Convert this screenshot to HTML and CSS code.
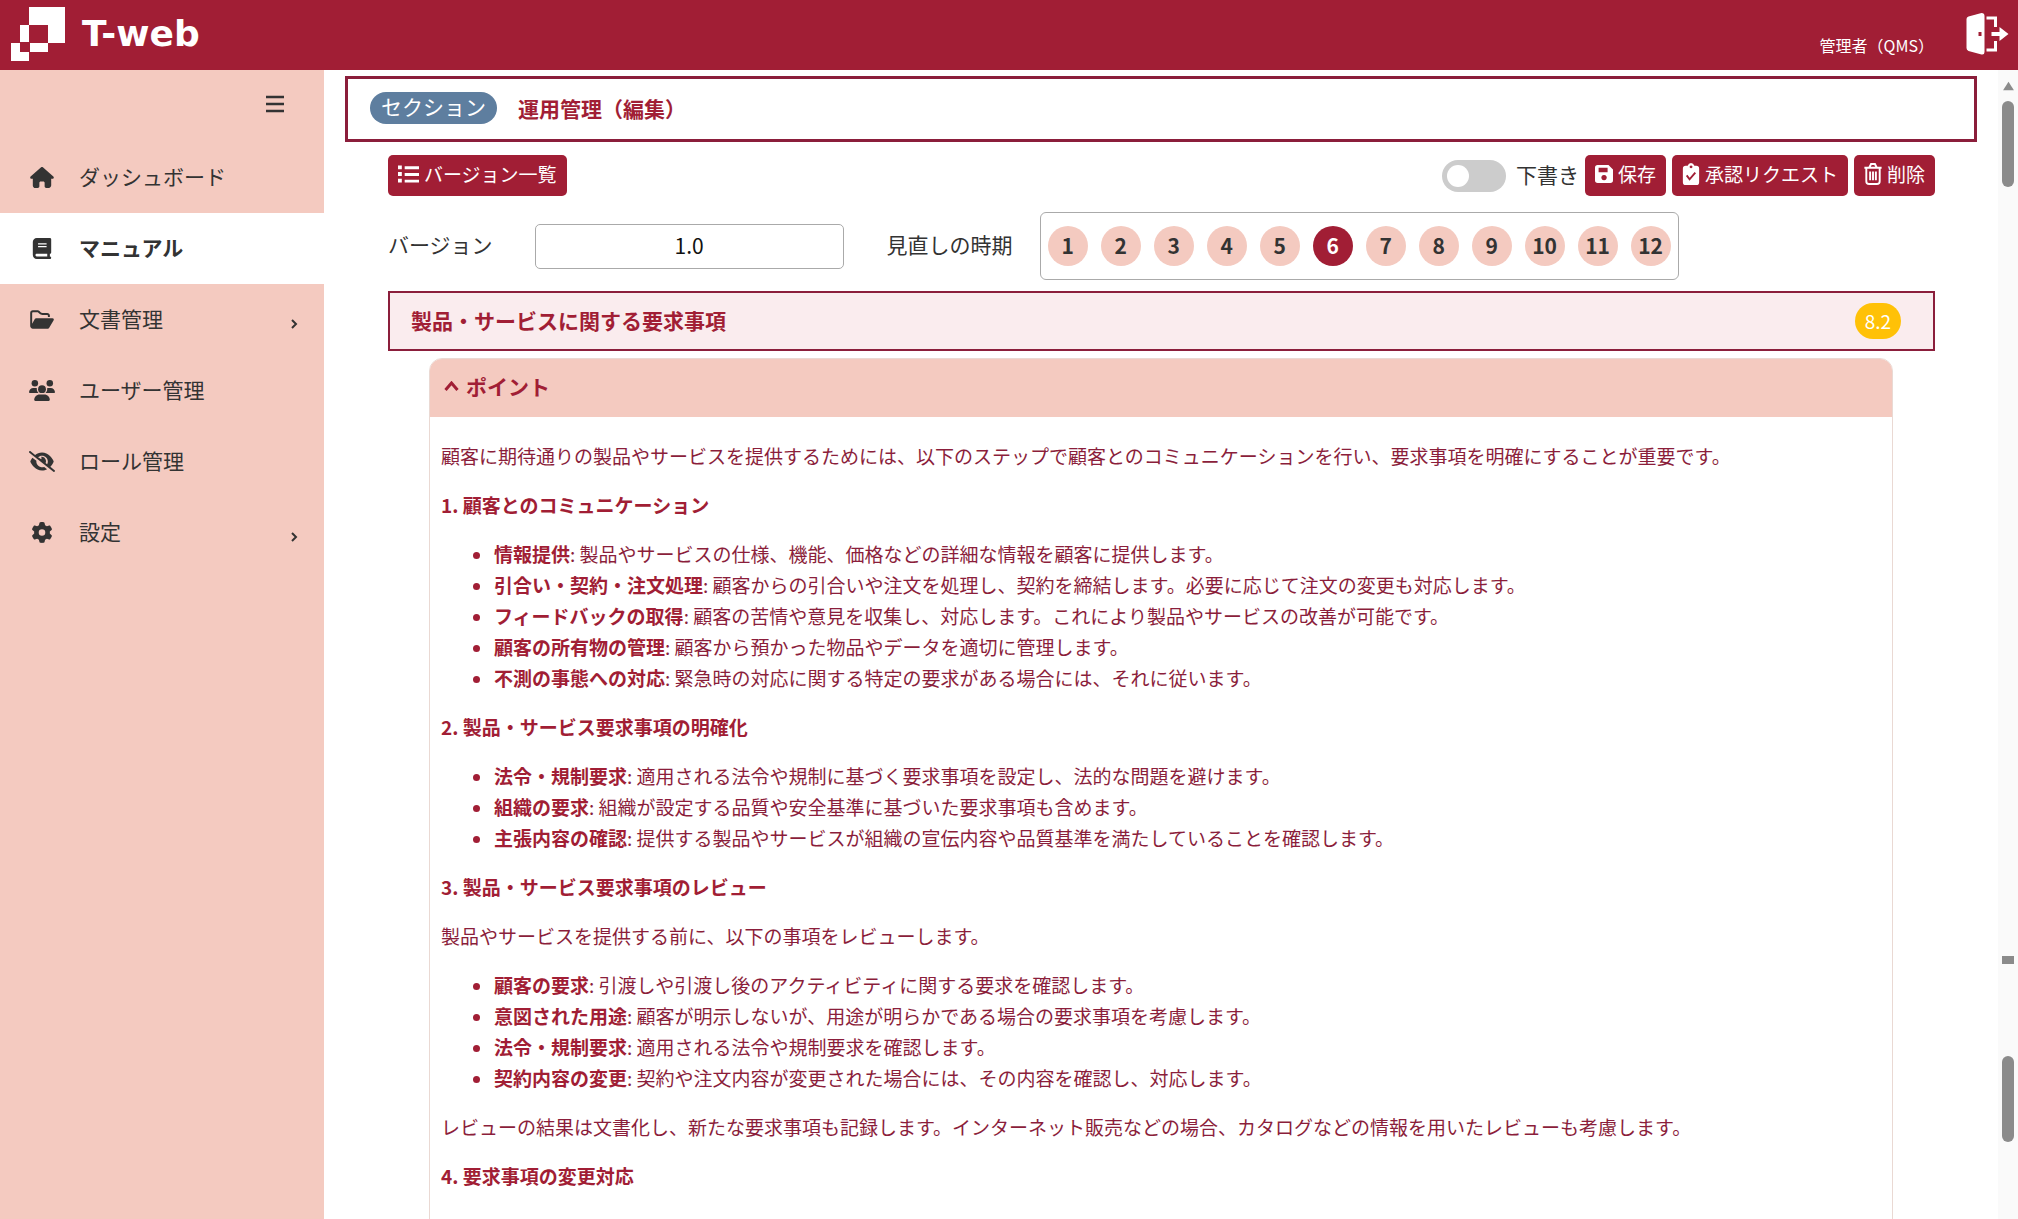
FILE: index.html
```html
<!DOCTYPE html>
<html lang="ja">
  <head>
    <meta charset="UTF-8" />
    <meta name="viewport" content="width=device-width, initial-scale=1.0" />
    <title>T-web</title>

    <link rel="stylesheet" href="styles.css">
  </head>
  <body>
    <header class="topbar">
      <a href="#" class="brand">
        <svg class="brand-mark" viewBox="0 0 54 54" fill="#fff">
          <path d="M18 0h36v36H37V18H18z" />
          <path d="M9 18h9v17H9z" />
          <path d="M0 36h9v9h9v9H0z" />
          <path d="M19 36h18v9H19z" />
        </svg>
        <span class="brand-name">T-web</span>
      </a>
      <div class="account">
        <span class="user-name">管理者（QMS）</span>
        <button type="button" class="logout" aria-label="ログアウト">
          <svg viewBox="0 0 42 42">
            <path d="M0 6Q0 4 2 3.500L15 0Q18 0 18 3V39Q18 42 15 41.500L2 38Q0 37 0 35z" fill="#fff" />
            <path d="M12 19h3v4h-3z" fill="#a11e35" />
            <path d="M20 5h9v9M29 28v9h-9" fill="none" stroke="#fff" stroke-width="3" />
            <path d="M25 19h8v-5l9 7-9 7v-5h-8z" fill="#fff" />
          </svg>
        </button>
      </div>
    </header>

    <div class="layout">
      <nav class="sidebar">
        <button type="button" class="menu-toggle" aria-label="メニュー">
          <svg viewBox="0 0 18 18" stroke="#333" stroke-width="2.500"><path d="M0 2h18M0 9h18M0 16h18" /></svg>
        </button>
        <ul class="menu">
          <li>
            <a href="#">
              <svg viewBox="0 0 576 512"><path d="M575.800 255.500c0 18-15 32.100-32 32.100h-32l.7 160.200c0 36-28 64.200-56 64.200H392c-22 0-40-18-40-40v-88c0-18-14-32-32-32h-64c-18 0-32 14-32 32v88c0 22-18 40-40 40h-64c-28 0-56-28-56-64V287.600H32c-18 0-32-14-32-32 0-9 3-17 10-24L266.400 8c7-7 15-8 22-8s15 2 21 7l255 224.500c8 7 12 15 11.400 24z" /></svg>
              <span>ダッシュボード</span>
            </a>
          </li>
          <li class="active">
            <a href="#">
              <svg viewBox="0 0 448 512"><path fill-rule="evenodd" d="M96 0C43 0 0 43 0 96v320c0 53 43 96 96 96h320c18 0 32-14 32-32s-14-32-32-32v-64c18 0 32-14 32-32V32c0-18-14-32-32-32H96zm0 384h256v64H96c-18 0-32-14-32-32s14-32 32-32zm32-256h208v32H128zm0 64h208v32H128z" /></svg>
              <span>マニュアル</span>
            </a>
          </li>
          <li>
            <a href="#">
              <svg viewBox="0 0 576 512"><path d="M384 480h48c11 0 22-6 28-16l112-192c6-10 6-22 0-32s-16-16-28-16H144c-11 0-22 6-28 16L48 357V96c0-9 7-16 16-16h118c4 0 8 2 11 5l26 26c21 21 50 33 80 33h117c9 0 16 7 16 16v32h48v-32c0-35-29-64-64-64H299c-17 0-33-7-45-19l-27-26c-12-12-28-19-45-19H64C29 32 0 61 0 96v320c0 35 29 64 64 64z" /></svg>
              <span>文書管理</span>
              <svg class="arrow" viewBox="0 0 7 10"><path d="M1 1l4 4-4 4" /></svg>
            </a>
          </li>
          <li>
            <a href="#">
              <svg class="wide" viewBox="0 0 640 512"><circle cx="144" cy="80" r="80" /><circle cx="512" cy="80" r="80" /><path d="M0 299c0-59 48-107 107-107h43c16 0 31 4 45 10-10 49 9 90 41 118H21c-12 0-21-10-21-21zm405 21c32-28 51-69 41-118 14-6 28-10 44-10h43c59 0 107 48 107 107 0 11-9 21-21 21z" /><circle cx="320" cy="224" r="96" /><path d="M128 485c0-73 60-133 133-133h118c73 0 133 60 133 133 0 15-12 27-27 27H155c-15 0-27-12-27-27z" /></svg>
              <span>ユーザー管理</span>
            </a>
          </li>
          <li>
            <a href="#">
              <svg class="wide" viewBox="0 0 640 512"><path d="M39 5c-10-8-25-6-34 4s-6 25 4 34l592 464c10 8 25 6 34-4s6-25-4-34L526 387c40-40 66-86 78-117 4-9 4-19 0-28-16-37-49-87-95-130C465 68 400 32 320 32c-68 0-125 26-169 61zm184 145c26-24 60-38 97-38 80 0 144 64 144 144 0 25-6 48-17 69l-39-31c11-23 13-51 6-78-14-52-64-84-116-78 6 10 10 22 10 34 0 10-2 20-6 28zM373 390a144 144 0 0 1-191-151L83 161c-22 28-38 58-47 81-4 9-4 19 0 28 16 37 49 87 95 130 44 44 109 80 189 80 47 0 89-13 125-33z" /></svg>
              <span>ロール管理</span>
            </a>
          </li>
          <li>
            <a href="#">
              <svg viewBox="0 0 512 512"><path fill-rule="evenodd" d="M496 167c3 9 0 18-6 25l-44 39c2 16 2 34 0 50l44 39c6 7 9 16 6 25-10 27-24 52-42 75-6 7-15 9-24 6l-56-18c-13 10-28 19-43 25l-13 57c-2 9-9 16-18 18-29 5-59 5-88 0-9-2-16-9-18-18l-13-57c-15-6-30-15-43-25l-56 18c-9 3-18 1-24-6-18-23-32-48-42-75-3-9 0-18 6-25l44-39c-2-16-2-34 0-50l-44-39c-6-7-9-16-6-25 10-27 24-52 42-75 6-7 15-9 24-6l56 18c13-10 28-19 43-25l13-57c2-9 9-16 18-18 29-5 59-5 88 0 9 2 16 9 18 18l13 57c15 6 30 15 43 25l56-18c9-3 18-1 24 6 18 23 32 48 42 75zM256 336a80 80 0 1 0 0-160 80 80 0 1 0 0 160z" /></svg>
              <span>設定</span>
              <svg class="arrow" viewBox="0 0 7 10"><path d="M1 1l4 4-4 4" /></svg>
            </a>
          </li>
        </ul>
      </nav>

      <main class="content">
        <div class="section-title">
          <span class="section-badge">セクション</span>
          <h1>運用管理（編集）</h1>
        </div>

        <form class="editor">
          <div class="toolbar">
            <button type="button" class="btn">
              <svg class="list" viewBox="0 0 22 20"><path d="M0 1h4v4H0zM0 8h4v4H0zM0 15h4v4H0zM7 2h15v3H7zM7 9h15v3H7zM7 16h15v3H7z" /></svg>
              バージョン一覧
            </button>
            <div class="actions">
              <input type="checkbox" id="draft" class="switch" />
              <label for="draft">下書き</label>
              <button type="button" class="btn">
                <svg viewBox="0 0 20 20"><path fill-rule="evenodd" d="M3 0h12l5 5v12q0 3-3 3H3q-3 0-3-3V3q0-3 3-3zM4 3v5h10V3zM10 11a3 3 0 1 0 .1 0z" /></svg>
                保存
              </button>
              <button type="button" class="btn">
                <svg viewBox="0 0 17 23"><path fill-rule="evenodd" d="M3 3h2q1-3 3.500-3T12 3h2q3 0 3 3v14q0 3-3 3H3q-3 0-3-3V6q0-3 3-3zM8.500 2.500a1.500 1.500 0 1 0 .1 0z" /><path d="M4 13l3 4 6-7" fill="none" stroke="#a11e35" stroke-width="2" /></svg>
                承認リクエスト
              </button>
              <button type="button" class="btn">
                <svg viewBox="0 0 18 23"><path d="M0 5h18M5 5l2-4h4l2 4M2 5v14q0 3 3 3h8q3 0 3-3V5M6 9v9M9 9v9M12 9v9" fill="none" stroke="#fff" stroke-width="2" /></svg>
                削除
              </button>
            </div>
          </div>

          <div class="fields">
            <label for="version">バージョン</label>
            <input type="text" id="version" value="1.0" />
            <span class="review-label">見直しの時期</span>
            <div class="months">
              <button type="button">1</button>
              <button type="button">2</button>
              <button type="button">3</button>
              <button type="button">4</button>
              <button type="button">5</button>
              <button type="button" class="selected">6</button>
              <button type="button">7</button>
              <button type="button">8</button>
              <button type="button">9</button>
              <button type="button">10</button>
              <button type="button">11</button>
              <button type="button">12</button>
            </div>
          </div>

          <div class="clause">
            <h2>製品・サービスに関する要求事項</h2>
            <span class="clause-no">8.2</span>
          </div>
        </form>

        <section class="point">
          <button type="button" class="point-header">
            <svg viewBox="0 0 16 10"><path d="M2 9l6-7 6 7" /></svg>
            ポイント
          </button>
          <div class="point-body">
            <p>顧客に期待通りの製品やサービスを提供するためには、以下のステップで顧客とのコミュニケーションを行い、要求事項を明確にすることが重要です。</p>
            <h3>1. 顧客とのコミュニケーション</h3>
            <ul>
              <li><strong>情報提供</strong>: 製品やサービスの仕様、機能、価格などの詳細な情報を顧客に提供します。</li>
              <li><strong>引合い・契約・注文処理</strong>: 顧客からの引合いや注文を処理し、契約を締結します。必要に応じて注文の変更も対応します。</li>
              <li><strong>フィードバックの取得</strong>: 顧客の苦情や意見を収集し、対応します。これにより製品やサービスの改善が可能です。</li>
              <li><strong>顧客の所有物の管理</strong>: 顧客から預かった物品やデータを適切に管理します。</li>
              <li><strong>不測の事態への対応</strong>: 緊急時の対応に関する特定の要求がある場合には、それに従います。</li>
            </ul>
            <h3>2. 製品・サービス要求事項の明確化</h3>
            <ul>
              <li><strong>法令・規制要求</strong>: 適用される法令や規制に基づく要求事項を設定し、法的な問題を避けます。</li>
              <li><strong>組織の要求</strong>: 組織が設定する品質や安全基準に基づいた要求事項も含めます。</li>
              <li><strong>主張内容の確認</strong>: 提供する製品やサービスが組織の宣伝内容や品質基準を満たしていることを確認します。</li>
            </ul>
            <h3>3. 製品・サービス要求事項のレビュー</h3>
            <p>製品やサービスを提供する前に、以下の事項をレビューします。</p>
            <ul>
              <li><strong>顧客の要求</strong>: 引渡しや引渡し後のアクティビティに関する要求を確認します。</li>
              <li><strong>意図された用途</strong>: 顧客が明示しないが、用途が明らかである場合の要求事項を考慮します。</li>
              <li><strong>法令・規制要求</strong>: 適用される法令や規制要求を確認します。</li>
              <li><strong>契約内容の変更</strong>: 契約や注文内容が変更された場合には、その内容を確認し、対応します。</li>
            </ul>
            <p>レビューの結果は文書化し、新たな要求事項も記録します。インターネット販売などの場合、カタログなどの情報を用いたレビューも考慮します。</p>
            <h3>4. 要求事項の変更対応</h3>
          </div>
        </section>
      </main>

      <div class="scrollbar">
        <svg viewBox="0 0 12 10"><path d="M6 1l5 8H1z" /></svg>
        <div class="thumb"></div>
        <div class="grip"></div>
        <div class="thumb"></div>
      </div>
    </div>
  </body>
</html>
```
FILE: styles.css
```css
* {
  box-sizing: border-box;
}

body {
  margin: 0;
  height: 100vh;
  overflow: hidden;
  display: flex;
  flex-direction: column;
  font-family: "Noto Sans CJK JP", sans-serif;
  font-size: 21px;
  line-height: 30px;
  color: #333;
  background-color: #fff;
}

button,
input {
  font: inherit;
  color: inherit;
}

button {
  border: none;
  cursor: pointer;
}

a {
  color: inherit;
  text-decoration: none;
}

/* header */
.topbar {
  flex: none;
  height: 70px;
  display: flex;
  justify-content: space-between;
  padding: 0 9px 0 11px;
  color: white;
  background-color: #a11e35;
}

.brand {
  display: flex;
  align-items: center;
  gap: 17px;
  padding-bottom: 2px;
}

.brand-mark {
  width: 54px;
  height: 54px;
}

.brand-name {
  font-family: "DejaVu Sans", sans-serif;
  font-size: 36px;
  font-weight: bold;
}

.account {
  display: flex;
  align-items: flex-start;
  gap: 32px;
}

.user-name {
  margin-top: 30px;
  font-size: 16px;
}

.logout {
  padding: 0;
  margin-top: 13px;
  background: none;
}

.logout svg {
  display: block;
  width: 43px;
  height: 42px;
}

.layout {
  flex: 1;
  min-height: 0;
  display: flex;
}

/* sidebar */
.sidebar {
  flex: none;
  width: 324px;
  background-color: #f4cac0;
}

.menu-toggle {
  display: block;
  margin: 25px 40px 29px auto;
  padding: 0;
  background: none;
}

.menu-toggle svg {
  display: block;
  width: 18px;
  height: 18px;
}

.menu {
  margin: 0;
  padding: 0;
  list-style: none;
}

.menu a {
  display: flex;
  align-items: center;
  height: 71px;
  padding: 0 26px 0 30px;
}

.menu span {
  padding-bottom: 4px;
}

.menu svg {
  width: 24px;
  height: 21px;
  margin-right: 25px;
  fill: #333;
}

.menu svg.wide {
  width: 26px;
  margin: 0 24px 0 -1px;
}

.menu svg.arrow {
  width: 7px;
  height: 10px;
  margin: 8px 0 0 auto;
  fill: none;
  stroke: #333;
  stroke-width: 2;
}

.menu .active {
  font-weight: bold;
  background-color: white;
}

/* main area */
.content {
  flex: 1;
  min-width: 0;
  padding: 6px 21px 0 21px;
  overflow: hidden;
}

.section-title {
  display: flex;
  align-items: center;
  gap: 21px;
  height: 66px;
  padding: 0 22px 2px;
  border: 3px solid #8b1e3b;
}

.section-badge {
  height: 32px;
  padding: 0 11px;
  border-radius: 16px;
  line-height: 28px;
  color: white;
  background-color: #5e7e9f;
}

.section-title h1 {
  margin: 0;
  font-size: 21px;
  color: #a11e35;
}

.editor {
  padding: 13px 42px 0 43px;
}

.toolbar {
  display: flex;
  justify-content: space-between;
}

.btn {
  display: flex;
  align-items: center;
  gap: 5px;
  height: 41px;
  padding: 0 10px 4px;
  border-radius: 5px;
  font-size: 19px;
  color: white;
  background-color: #a11e35;
}

.btn svg {
  width: 18px;
  height: 22px;
  fill: #fff;
}

.btn svg.list {
  width: 21px;
}

.actions {
  display: flex;
  align-items: center;
  gap: 6px;
}

.actions label,
.fields label,
.review-label {
  padding-bottom: 4px;
}

.switch {
  appearance: none;
  width: 64px;
  height: 32px;
  margin: 0 4px 0 0;
  padding: 5px;
  border-radius: 16px;
  background-color: #ccc;
}

.switch::before {
  content: "";
  display: block;
  width: 22px;
  height: 22px;
  border-radius: 50%;
  background-color: white;
}

.fields {
  display: flex;
  align-items: center;
  margin: 16px 0 11px;
}

#version {
  width: 309px;
  height: 45px;
  margin: 0 43px 0 42px;
  padding: 0 0 3px;
  border: 1px solid #aaa;
  border-radius: 5px;
  text-align: center;
  color: #111;
}

.months {
  display: flex;
  gap: 13px;
  margin-left: 27px;
  padding: 13px 7px;
  border: 1px solid #aaa;
  border-radius: 6px;
}

.months button {
  width: 40px;
  height: 40px;
  padding: 0 0 3px;
  border-radius: 50%;
  font-weight: bold;
  background-color: #f4cac0;
}

.months .selected {
  color: white;
  background-color: #a11e35;
}

.clause {
  display: flex;
  align-items: center;
  justify-content: space-between;
  height: 60px;
  padding: 0 32px 0 21px;
  border: 2px solid #8b1e3b;
  background-color: #faecee;
}

.clause h2 {
  margin: 0;
  padding-bottom: 3px;
  font-size: 21px;
  color: #a11e35;
}

.clause-no {
  height: 36px;
  padding: 0 10px;
  border-radius: 18px;
  font-size: 19px;
  line-height: 36px;
  color: white;
  background-color: #ffc107;
}

.point {
  margin: 7px 84px 0;
  border: 1px solid #ead9d3;
  border-radius: 13px 13px 0 0;
  overflow: hidden;
  color: #a11e35;
}

.point-header {
  display: flex;
  align-items: center;
  gap: 6px;
  width: 100%;
  height: 58px;
  padding: 0 13px 4px;
  font-weight: bold;
  background-color: #f4cac0;
}

.point-header svg {
  width: 17px;
  height: 10px;
  fill: none;
  stroke: #a11e35;
  stroke-width: 3;
}

.point-body {
  padding: 23px 11px;
  font-size: 19px;
  line-height: 31px;
  color: #8b1e3b;
}

.point-body p,
.point-body ul,
.point-body h3 {
  margin: 0 0 18px;
}

.point-body h3 {
  font-size: 19px;
}

.point-body h3,
.point-body strong {
  color: #a11e35;
}

.point-body ul {
  padding-left: 53px;
}

.point-body li::marker {
  color: #a11e35;
}

/* scroll track on the right edge */
.scrollbar {
  flex: none;
  display: flex;
  flex-direction: column;
  align-items: center;
  width: 20px;
  padding-top: 10px;
  background-color: #fafafa;
}

.scrollbar svg {
  width: 13px;
  height: 12px;
  margin-bottom: 9px;
  fill: #8b8b8b;
}

.thumb {
  width: 12px;
  height: 86px;
  border-radius: 6px;
  background-color: #8b8b8b;
}

.grip {
  width: 12px;
  height: 8px;
  margin: 769px 0 92px;
  background-color: #8b8b8b;
}
```
